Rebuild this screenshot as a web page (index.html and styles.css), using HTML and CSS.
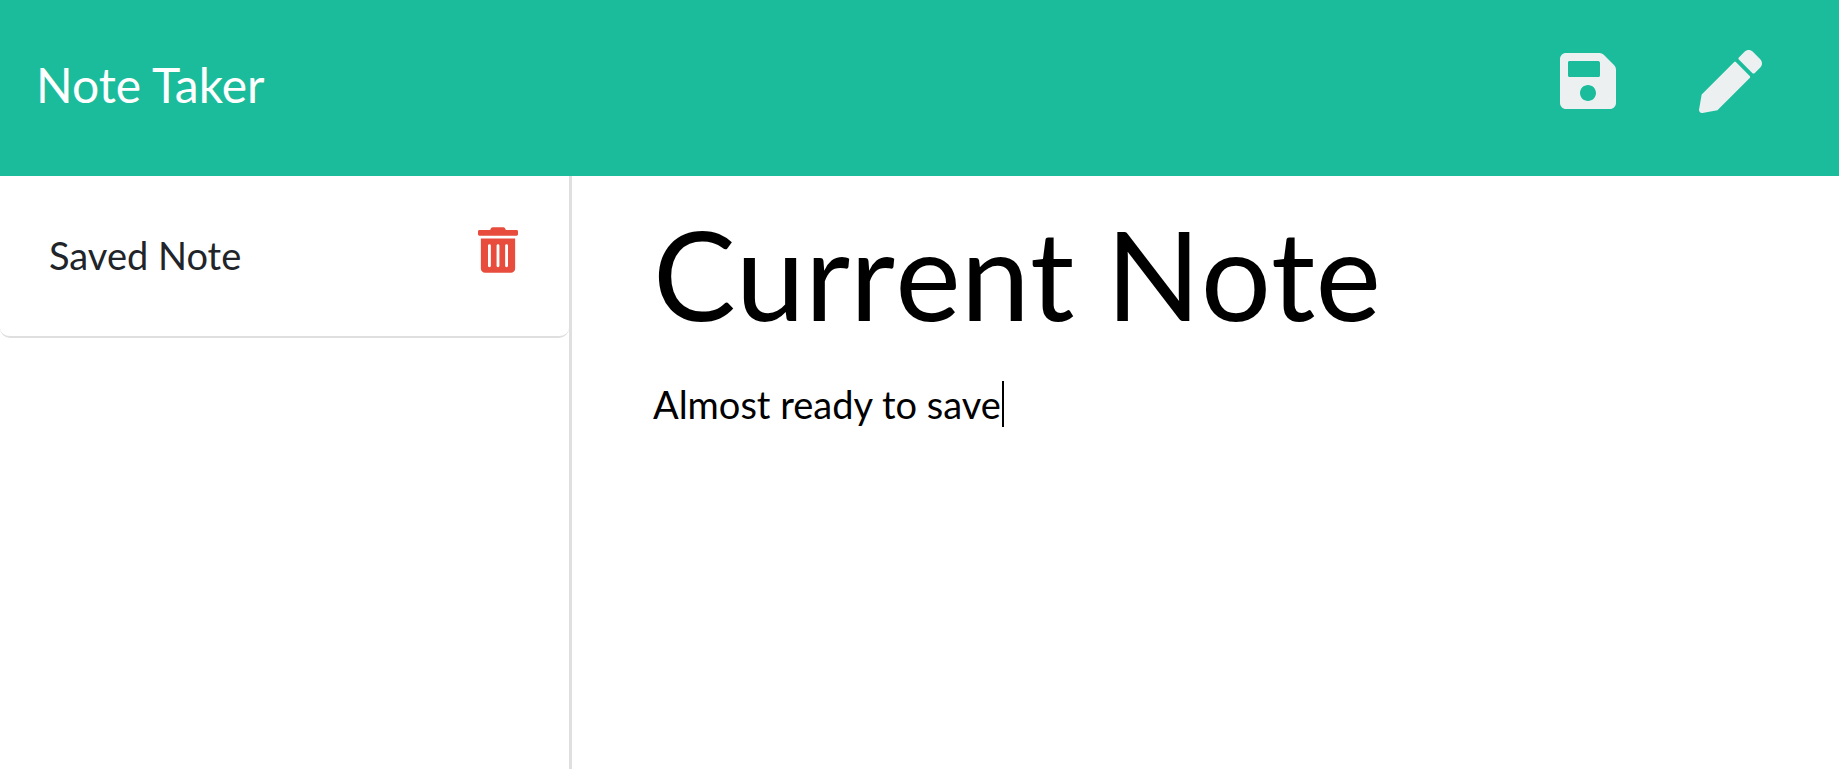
FILE: index.html
```html
<!DOCTYPE html>
<html lang="en">
<head>
<meta charset="utf-8">
<title>Note Taker</title>
<link rel="stylesheet" href="styles.css">
</head>
<body>
<nav class="navbar">
  <a class="brand" href="#">Note Taker</a>
  <div class="actions">
    <button class="icon-button" type="button" aria-label="Save note"><svg class="icon-save" viewBox="0 0 448 512"><path d="M433.941 129.941l-83.882-83.882A48 48 0 0 0 316.118 32H48C21.490 32 0 53.490 0 80v352c0 26.510 21.490 48 48 48h352c26.510 0 48-21.490 48-48V163.882a48 48 0 0 0-14.059-33.941zM224 416c-35.346 0-64-28.654-64-64 0-35.346 28.654-64 64-64s64 28.654 64 64c0 35.346-28.654 64-64 64zm96-304.520V212c0 6.627-5.373 12-12 12H76c-6.627 0-12-5.373-12-12V108c0-6.627 5.373-12 12-12h228.520c3.183 0 6.235 1.264 8.485 3.515l3.480 3.480A11.996 11.996 0 0 1 320 111.480z"/></svg></button>
    <button class="icon-button" type="button" aria-label="New note"><svg class="icon-pencil" viewBox="0 0 512 512"><path d="M497.900 142.100l-46.100 46.100c-4.700 4.700-12.300 4.700-17 0l-111-111c-4.700-4.700-4.700-12.300 0-17l46.100-46.100c18.700-18.700 49.100-18.700 67.900 0l60.100 60.100c18.800 18.700 18.800 49.100 0 67.900zM284.200 99.800L21.600 362.400.4 483.900c-2.900 16.400 11.400 30.600 27.800 27.800l121.500-21.300 262.600-262.600c4.700-4.700 4.700-12.300 0-17l-111-111c-4.800-4.700-12.400-4.700-17.100 0z"/></svg></button>
  </div>
</nav>
<main class="layout">
  <aside class="sidebar">
    <ul class="note-list">
      <li class="note-item"><span>Saved Note</span>
        <button class="icon-button" type="button" aria-label="Delete note"><svg class="icon-trash" viewBox="0 0 448 512"><path d="M32 464a48 48 0 0 0 48 48h288a48 48 0 0 0 48-48V128H32zm272-256a16 16 0 0 1 32 0v224a16 16 0 0 1-32 0zm-96 0a16 16 0 0 1 32 0v224a16 16 0 0 1-32 0zm-96 0a16 16 0 0 1 32 0v224a16 16 0 0 1-32 0zM432 32H312l-9.400-18.700A24 24 0 0 0 281.100 0H166.800a23.720 23.720 0 0 0-21.400 13.300L136 32H16A16 16 0 0 0 0 48v32a16 16 0 0 0 16 16h416a16 16 0 0 0 16-16V48a16 16 0 0 0-16-16z"/></svg></button>
      </li>
    </ul>
  </aside>
  <section class="editor">
    <input class="note-title" type="text" aria-label="Note title" value="Current Note">
    <div class="note-body">
      <textarea class="note-text" aria-label="Note text">Almost ready to save</textarea>
      <span class="caret" aria-hidden="true"></span>
    </div>
  </section>
</main>
<script src="script.js"></script>
</body>
</html>
```
FILE: styles.css
```css
* { box-sizing: border-box; }
body { margin: 0; min-height: 100vh; display: flex; flex-direction: column; background: #fff; color: #212529; font-family: Lato, sans-serif; font-size: 38px; line-height: 60px; }
.navbar { display: flex; justify-content: space-between; align-items: center; padding: 49px 77px 63px 36px; background: #1abc9c; }
.brand { padding-top: 8px; color: #fff; font-size: 48px; line-height: 56px; text-decoration: none; }
.actions { display: flex; align-items: center; gap: 83px; }
.icon-button { display: block; padding: 0; border: 0; background: none; color: #ecf0f1; cursor: pointer; }
.icon-button svg { display: block; fill: currentColor; }
.icon-save { width: 56px; height: 64px; }
.icon-pencil { width: 63px; height: 63px; }
.icon-trash { width: 40px; height: 46px; }
.layout { flex: 1; display: grid; grid-template-columns: 572px 1fr; }
.sidebar { border-right: 3px solid #dfdfdf; }
.note-list { margin: 0; padding: 0; list-style: none; }
.note-item { display: flex; justify-content: space-between; align-items: flex-start; padding: 49px 51px 51px 49px; border-bottom: 2px solid #dfdfdf; border-radius: 0 0 10px 10px; }
.note-item .icon-button { padding-top: 2px; color: #e74c3c; }
.editor { display: flex; flex-direction: column; padding: 22px 80px 0 81px; }
.note-title, .note-text { display: block; width: 100%; padding: 0; border: 0; outline: 0; background: none; color: #000; font-family: inherit; }
.note-title { height: 150px; font-size: 124px; font-kerning: none; }
.note-body { position: relative; flex: 1; display: flex; margin-top: 26px; }
.note-text { font-size: 38px; line-height: 60px; resize: none; caret-color: transparent; }
.caret { position: absolute; top: 7px; left: 0; width: 2px; height: 46px; background: #000; pointer-events: none; }
```
FILE: script.js
```js
const text = document.querySelector(".note-text");
const caret = document.querySelector(".caret");
const pen = document.createElement("canvas").getContext("2d");

// Keeps the drawn caret at the end of the last line of the note.
function placeCaret() {
  const style = getComputedStyle(text);
  const lines = text.value.split("\n");
  pen.font = style.fontSize + " " + style.fontFamily;
  const width = pen.measureText(lines[lines.length - 1]).width;
  const drop = (lines.length - 1) * parseInt(style.lineHeight, 10);
  caret.style.transform = `translate(${Math.round(width)}px, ${drop}px)`;
}

text.addEventListener("input", placeCaret);
placeCaret();
text.focus();
text.setSelectionRange(text.value.length, text.value.length);
```
